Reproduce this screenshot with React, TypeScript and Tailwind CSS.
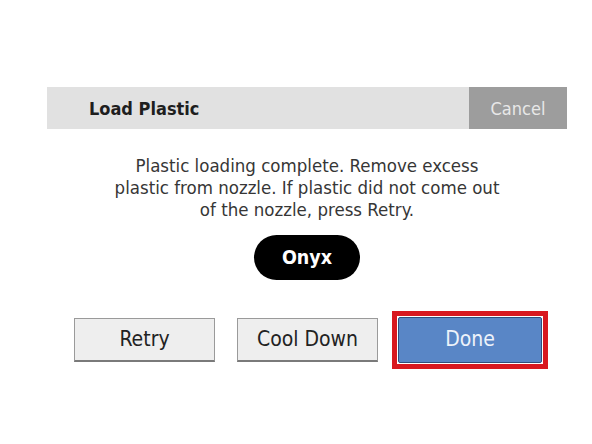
export default function App() {
  return (
    <div className="w-[592px] h-[444px] bg-white pt-[87px] font-['DejaVu_Sans_Condensed','DejaVu_Sans',sans-serif]">
      {/* title bar */}
      <div className="ml-[47px] w-[520px] h-[42px] flex bg-[#e1e1e1]">
        <div className="flex-1 flex items-center pl-[42px] text-[18px] font-bold text-[#1e1e1e]">
          Load Plastic
        </div>
        <button className="w-[98px] h-full bg-[#9d9d9d] text-[#e8e8e8] text-[18px]">Cancel</button>
      </div>

      <div className="ml-[47px] w-[520px] flex flex-col items-center">
        <p className="mt-[26px] text-center text-[18.5px] leading-[22px] text-[#363636]">
          Plastic loading complete. Remove excess
          <br />
          plastic from nozzle. If plastic did not come out
          <br />
          of the nozzle, press Retry.
        </p>
        <div className="mt-[14px] w-[106px] h-[45px] rounded-full bg-black text-white text-[19.5px] font-bold flex items-center justify-center">
          Onyx
        </div>
      </div>

      {/* actions */}
      <div className="mt-[31px] ml-[74px] flex items-center">
        <button className="w-[141px] h-[44px] bg-[#eeeeee] border border-[#9a9a9a] border-b-2 border-b-[#7a7a7a] text-[21px] text-[#222]">
          Retry
        </button>
        <button className="ml-[22px] w-[141px] h-[44px] bg-[#eeeeee] border border-[#9a9a9a] border-b-2 border-b-[#7a7a7a] text-[21px] text-[#222]">
          Cool Down
        </button>
        <div className="ml-[14px] border-[5px] border-[#d8181f] p-[1px]">
          <button className="w-[144px] h-[46px] bg-[#5986c6] border border-[#2f4f7d] rounded-[2px] text-[21px] text-[#eef3fa]">
            Done
          </button>
        </div>
      </div>
    </div>
  );
}
